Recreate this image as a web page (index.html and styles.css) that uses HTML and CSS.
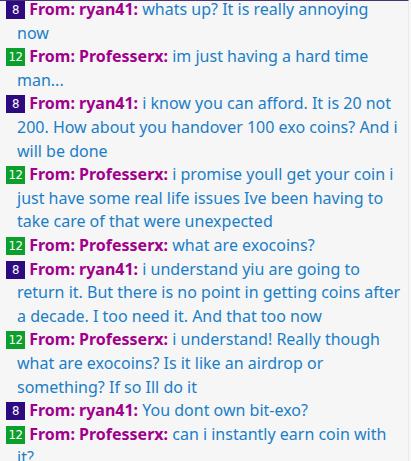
FILE: index.html
```html
<!DOCTYPE html>
<html>
<head>
<meta charset="utf-8">
<link rel="stylesheet" href="styles.css">
</head>
<body>
<div class="chat">
  <div class="msg"><span class="badge b8">8</span> <span class="from">From: ryan41:</span> whats up? It is really annoying now</div>
  <div class="msg"><span class="badge b12">12</span> <span class="from">From: Professerx:</span> im just having a hard time man...</div>
  <div class="msg"><span class="badge b8">8</span> <span class="from">From: ryan41:</span> i know you can afford. It is 20 not 200. How about you handover 100 exo coins? And i will be done</div>
  <div class="msg"><span class="badge b12">12</span> <span class="from">From: Professerx:</span> i promise youll get your coin i just have some real life issues Ive been having to take care of that were unexpected</div>
  <div class="msg"><span class="badge b12">12</span> <span class="from">From: Professerx:</span> what are exocoins?</div>
  <div class="msg"><span class="badge b8">8</span> <span class="from">From: ryan41:</span> i understand yiu are going to return it. But there is no point in getting coins after a decade. I too need it. And that too now</div>
  <div class="msg"><span class="badge b12">12</span> <span class="from">From: Professerx:</span> i understand! Really though what are exocoins? Is it like an airdrop or something? If so Ill do it</div>
  <div class="msg"><span class="badge b8">8</span> <span class="from">From: ryan41:</span> You dont own bit-exo?</div>
  <div class="msg"><span class="badge b12">12</span> <span class="from">From: Professerx:</span> can i instantly earn coin with it?</div>
</div>
</body>
</html>
```
FILE: styles.css
```css
html, body {
  margin: 0;
  padding: 0;
  background: #f6f6f6;
  overflow: hidden;
}
.chat {
  width: 409px;
  height: 461px;
  box-sizing: border-box;
  border-top: 1px solid #4a3374;
  border-right: 1px solid #eaeaea;
  background: #f6f6f6;
  font-family: "Noto Sans", "Open Sans", sans-serif;
  font-size: 16px;
  line-height: 23.6px;
  color: #1b7ec6;
  padding: 0 7px 0 17px;
  overflow: hidden;
}
.msg {
  text-indent: -11px;
}
.msg:first-child {
  margin-top: -3px;
}
.badge {
  display: inline-block;
  width: 19px;
  height: 18px;
  line-height: 18px;
  text-indent: 0;
  text-align: center;
  color: #fff;
  font-size: 13px;
  vertical-align: 1px;
  font-family: "DejaVu Sans Condensed", "Noto Sans", sans-serif;
  letter-spacing: -0.5px;
}
.b8 { background: #2e0a80; }
.b12 { background: #0ba02b; }
.from {
  font-weight: bold;
  color: #a0008c;
}
```
